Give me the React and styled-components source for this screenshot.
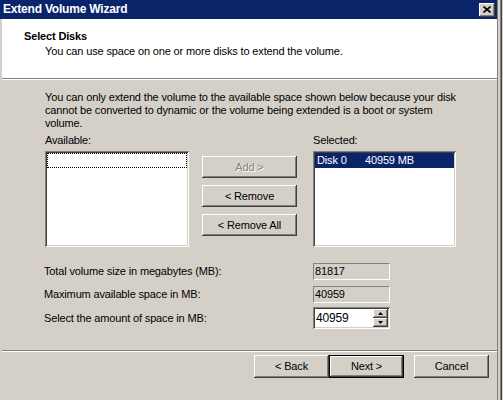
import React from 'react';
import styled, { createGlobalStyle } from 'styled-components';

const Global = createGlobalStyle`
  html, body { margin: 0; padding: 0; background: #d4d0c8; }
  body {
    font-family: "Liberation Sans", Arial, sans-serif;
    font-size: 11px;
    line-height: 13px;
    letter-spacing: -0.15px;
    color: #000;
  }
  * { box-sizing: border-box; }
`;

const Window = styled.div`
  width: 503px;
  height: 400px;
  display: flex;
  flex-direction: column;
  padding-right: 6px;
  background: linear-gradient(
    to left,
    #d4d0c8 0 1px,
    #404040 1px 2px,
    #808080 2px 3px,
    #d4d0c8 3px 5px,
    #808080 5px 6px,
    #d4d0c8 6px
  );
  overflow: hidden;
`;

const TitleBar = styled.div`
  height: 19px;
  flex: none;
  background: #0a246a;
  display: flex;
  align-items: center;
  justify-content: space-between;
  padding: 0 2px 0 3px;
`;

const TitleText = styled.span`
  color: #fff;
  font-weight: bold;
  font-size: 12px;
  letter-spacing: -0.2px;
`;

const CloseButton = styled.div`
  width: 16px;
  height: 14px;
  flex: none;
  background: #d4d0c8;
  display: flex;
  align-items: center;
  justify-content: center;
  box-shadow: inset -1px -1px #404040, inset 1px 1px #fff, inset -2px -2px #808080;
`;

const Client = styled.div`
  flex: 1;
  display: flex;
  flex-direction: column;
  border-left: 2px solid #d4d0c8;
`;

const Header = styled.div`
  height: 60px;
  flex: none;
  background: #fff;
  border-bottom: 1px solid #808080;
  padding: 11px 0 0 22px;
`;

const HeaderTitle = styled.div`
  font-weight: bold;
`;

const HeaderSub = styled.div`
  margin: 2px 0 0 21px;
`;

const Body = styled.div`
  flex: 1;
  border-top: 1px solid #fff;
  padding: 11px 0 0 43px;
  display: flex;
  flex-direction: column;
`;

const Paragraph = styled.p`
  margin: 0 0 4px;
  line-height: 13px;
`;

const ListsRow = styled.div`
  display: flex;
  align-items: flex-start;
`;

const ListColumn = styled.div`
  display: flex;
  flex-direction: column;
  width: ${(p) => p.$width}px;
  margin-left: ${(p) => p.$offset || 0}px;
`;

const ListBox = styled.div`
  margin-top: 4px;
  height: 96px;
  background: #fff;
  padding: 2px;
  box-shadow: inset 1px 1px #808080, inset -1px -1px #fff, inset 2px 2px #404040, inset -2px -2px #d4d0c8;
`;

const FocusRow = styled.div`
  height: 15px;
  border: 1px dotted #000;
`;

const SelectedRow = styled.div`
  height: 15px;
  background: #0a246a;
  color: #fff;
  display: flex;
  align-items: center;
  padding-left: 2px;
`;

const Cell = styled.span`
  width: ${(p) => p.$width}px;
`;

const ButtonColumn = styled.div`
  display: flex;
  flex-direction: column;
  gap: 7px;
  padding-top: 22px;
  margin-left: 13px;
`;

const Button = styled.div`
  width: ${(p) => p.$width || 75}px;
  height: ${(p) => p.$height || 23}px;
  background: #d4d0c8;
  display: flex;
  align-items: center;
  justify-content: center;
  color: ${(p) => (p.$disabled ? '#808080' : '#000')};
  text-shadow: ${(p) => (p.$disabled ? '1px 1px #fff' : 'none')};
  border: ${(p) => (p.$default ? '1px solid #000' : 'none')};
  box-shadow: inset -1px -1px #404040, inset 1px 1px #fff, inset -2px -2px #808080;
`;

const Fields = styled.div`
  margin-top: 16px;
  margin-left: -1px;
  display: flex;
  flex-direction: column;
`;

const FieldRow = styled.div`
  display: flex;
  align-items: center;
  margin-top: ${(p) => p.$top || 0}px;
`;

const FieldLabel = styled.span`
  width: 269px;
`;

const ReadOnlyField = styled.div`
  width: 77px;
  height: 17px;
  border: 1px solid;
  border-color: #808080 #fff #fff #808080;
  padding-left: 1px;
  display: flex;
  align-items: center;
`;

const Spinner = styled.div`
  width: 77px;
  height: 22px;
  background: #fff;
  display: flex;
  align-items: stretch;
  padding: 2px;
  box-shadow: inset 1px 1px #808080, inset -1px -1px #fff, inset 2px 2px #404040, inset -2px -2px #d4d0c8;
`;

const SpinValue = styled.div`
  flex: 1;
  display: flex;
  align-items: center;
  padding-left: 1px;
  font-size: 12px;
`;

const SpinButtons = styled.div`
  width: 15px;
  display: flex;
  flex-direction: column;
`;

const SpinButton = styled.div`
  flex: 1;
  background: #d4d0c8;
  display: flex;
  align-items: center;
  justify-content: center;
  box-shadow: inset -1px -1px #404040, inset 1px 1px #fff, inset -2px -2px #808080;
`;

const Footer = styled.div`
  height: 50px;
  flex: none;
  border-top: 1px solid #808080;
  box-shadow: inset 0 1px #fff;
  padding: 4px 8px 0 0;
  display: flex;
  justify-content: flex-end;
  align-items: flex-start;
`;

const FooterGap = styled.div`
  width: 10px;
`;

const Arrow = ({ up }) => (
  <svg width="5" height="3" viewBox="0 0 5 3">
    <path d={up ? 'M0 3 L5 3 L2.5 0 Z' : 'M0 0 L5 0 L2.5 3 Z'} fill="#000" />
  </svg>
);

export default function App() {
  return (
    <>
      <Global />
      <Window>
        <TitleBar>
          <TitleText>Extend Volume Wizard</TitleText>
          <CloseButton>
            <svg width="8" height="7" viewBox="0 0 8 7">
              <path d="M0.5 0.5 L7.5 6.5 M7.5 0.5 L0.5 6.5" stroke="#000" strokeWidth="1.6" />
            </svg>
          </CloseButton>
        </TitleBar>
        <Client>
          <Header>
            <HeaderTitle>Select Disks</HeaderTitle>
            <HeaderSub>You can use space on one or more disks to extend the volume.</HeaderSub>
          </Header>
          <Body>
            <Paragraph>
              You can only extend the volume to the available space shown below because your disk
              <br />
              cannot be converted to dynamic or the volume being extended is a boot or system
              <br />
              volume.
            </Paragraph>
            <ListsRow>
              <ListColumn $width={144}>
                <span>Available:</span>
                <ListBox>
                  <FocusRow />
                </ListBox>
              </ListColumn>
              <ButtonColumn>
                <Button $width={95} $height={22} $disabled>Add &gt;</Button>
                <Button $width={95} $height={22}>&lt; Remove</Button>
                <Button $width={95} $height={22}>&lt; Remove All</Button>
              </ButtonColumn>
              <ListColumn $width={143} $offset={16}>
                <span>Selected:</span>
                <ListBox>
                  <SelectedRow>
                    <Cell $width={48}>Disk 0</Cell>
                    <Cell $width={80}>40959 MB</Cell>
                  </SelectedRow>
                </ListBox>
              </ListColumn>
            </ListsRow>
            <Fields>
              <FieldRow>
                <FieldLabel>Total volume size in megabytes (MB):</FieldLabel>
                <ReadOnlyField>81817</ReadOnlyField>
              </FieldRow>
              <FieldRow $top={6}>
                <FieldLabel>Maximum available space in MB:</FieldLabel>
                <ReadOnlyField>40959</ReadOnlyField>
              </FieldRow>
              <FieldRow $top={4}>
                <FieldLabel>Select the amount of space in MB:</FieldLabel>
                <Spinner>
                  <SpinValue>40959</SpinValue>
                  <SpinButtons>
                    <SpinButton><Arrow up /></SpinButton>
                    <SpinButton><Arrow /></SpinButton>
                  </SpinButtons>
                </Spinner>
              </FieldRow>
            </Fields>
          </Body>
          <Footer>
            <Button>&lt; Back</Button>
            <Button $default>Next &gt;</Button>
            <FooterGap />
            <Button>Cancel</Button>
          </Footer>
        </Client>
      </Window>
    </>
  );
}
